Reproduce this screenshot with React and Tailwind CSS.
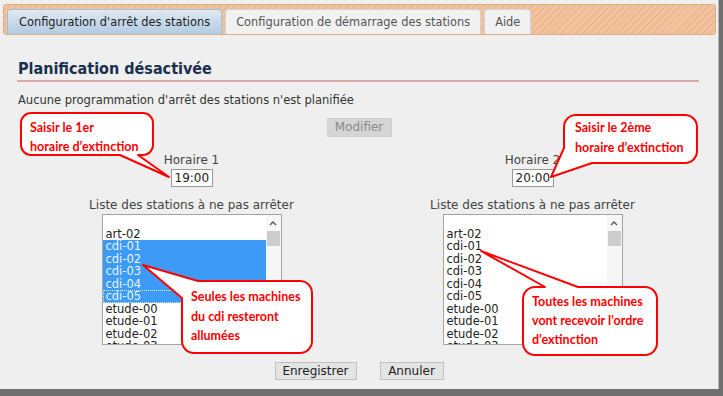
import React from "react";

const stations = [
  "",
  "art-02",
  "cdi-01",
  "cdi-02",
  "cdi-03",
  "cdi-04",
  "cdi-05",
  "etude-00",
  "etude-01",
  "etude-02",
  "etude-03",
];

const selectedLeft = ["cdi-01", "cdi-02", "cdi-03", "cdi-04", "cdi-05"];

const StationList = ({ selected = [] }) => {
  return (
    <div className="relative w-[180px] h-[131px] border border-[#a4a4a4] bg-white overflow-hidden">
      <div className="w-[164px]">
        {stations.map((name, i) => {
          const isSel = selected.includes(name);
          const isLast = name === "cdi-05" && isSel;
          return (
            <div
              key={i}
              className={
                "h-[12.5px] leading-[12.5px] pl-[3px] text-[11.5px] whitespace-nowrap " +
                (isSel ? "bg-[#3d9bf7] text-[#eaf3ff] " : "text-[#222] ") +
                (isLast ? "outline outline-1 outline-dotted outline-[#d8e8ff] -outline-offset-1" : "")
              }
            >
              {name}
            </div>
          );
        })}
      </div>
      {/* scrollbar */}
      <div className="absolute right-0 top-0 bottom-0 w-[15px] bg-[#f6f6f6] flex flex-col items-center">
        <div className="h-[15px] flex items-center justify-center">
          <svg width="8" height="6" viewBox="0 0 8 6">
            <path d="M1 5 L4 2 L7 5" fill="none" stroke="#555" strokeWidth="1.3" />
          </svg>
        </div>
        <div className="w-[13px] h-[15px] mt-[1px] bg-[#cdcdcd]" />
      </div>
    </div>
  );
};

const Column = ({ label, time, selected }) => (
  <div className="w-[260px] flex flex-col items-center">
    <div className="text-[12px] leading-[14px] text-[#444]">{label}</div>
    <div className="mt-[2px] w-[42px] h-[18px] border border-[#9a9a9a] bg-white text-[12px] leading-[16px] pl-[3px] text-[#222]">
      {time}
    </div>
    <div className="mt-[11px] text-[12px] leading-[14px] text-[#444] whitespace-nowrap">
      Liste des stations à ne pas arrêter
    </div>
    <div className="mt-[2px]">
      <StationList selected={selected} />
    </div>
  </div>
);

const calloutText = "absolute text-[#ff0000] font-bold text-[12.5px] whitespace-nowrap";

const App = () => {
  return (
    <div
      className="w-[723px] h-[396px] bg-[#6f6f6f] overflow-hidden"
      style={{ fontFamily: '"DejaVu Sans", Verdana, sans-serif' }}
    >
      <div className="relative w-[719px] h-[389px] bg-[#eeefee] border-r border-[#b8b8b8]">
        {/* tab bar */}
        <div className="pt-[4px] pl-[3px] pr-[2px]">
          <div className="h-[31px] rounded-[3px] border border-[#dcae86] bg-[repeating-linear-gradient(135deg,#f1c49e_0px,#f1c49e_3px,#ebba92_3px,#ebba92_5px)] flex items-end gap-[3px] pl-[3px]">
            <div className="h-[25px] px-[11px] rounded-t-[3px] border border-b-0 border-[#a7bfd6] bg-gradient-to-b from-[#dfe9f3] to-[#b2cbe2] text-[11.4px] leading-[24px] text-[#222]">
              Configuration d'arrêt des stations
            </div>
            <div className="h-[25px] px-[10px] rounded-t-[3px] border border-b-0 border-[#d2d2d2] bg-[#f1f1f1] text-[11.4px] leading-[24px] text-[#555]">
              Configuration de démarrage des stations
            </div>
            <div className="h-[25px] px-[10px] rounded-t-[3px] border border-b-0 border-[#d2d2d2] bg-[#f1f1f1] text-[11.4px] leading-[24px] text-[#555]">
              Aide
            </div>
          </div>
        </div>

        {/* heading */}
        <div className="px-[17px] mt-[24px]">
          <div className="text-[16px] leading-[20px] font-bold font-stretch-condensed text-[#1b2f4e] pl-[1px]">
            Planification désactivée
          </div>
          <div className="mt-[1px] h-[2px] bg-[#dba6a6] mr-[2px]" />
          <div className="mt-[11px] text-[11.5px] leading-[14px] text-[#333] pl-[1px]">
            Aucune programmation d'arrêt des stations n'est planifiée
          </div>
        </div>

        {/* modifier */}
        <div className="mt-[11px] flex justify-center">
          <div className="w-[65px] h-[19px] bg-[#d5d5d5] border border-[#d0d0d0] text-[12px] leading-[17px] text-center text-[#8a8a8a]">
            Modifier
          </div>
        </div>

        {/* columns */}
        <div className="mt-[16px] flex justify-center gap-[81px] pl-[6px]">
          <Column label="Horaire 1" time="19:00" selected={selectedLeft} />
          <Column label="Horaire 2" time="20:00" selected={[]} />
        </div>

        {/* buttons */}
        <div className="mt-[17px] flex justify-center gap-[23px]">
          <div className="w-[82px] h-[18px] bg-[#e4e4e4] border border-[#c0c0c0] text-[12px] leading-[16px] text-center text-[#222]">
            Enregistrer
          </div>
          <div className="w-[64px] h-[18px] bg-[#e4e4e4] border border-[#c0c0c0] text-[12px] leading-[16px] text-center text-[#222]">
            Annuler
          </div>
        </div>

        {/* callouts */}
        <svg className="absolute inset-0 pointer-events-none" width="719" height="389">
          <g fill="#fff" stroke="#ff0000" strokeWidth="2" strokeLinejoin="round">
            <path d="M31 113 H143 A10 10 0 0 1 153 123 V145 A10 10 0 0 1 143 155 H138 L169 177 L120 155 H31 A10 10 0 0 1 21 145 V123 A10 10 0 0 1 31 113 Z" />
            <path d="M576 115 H685 A12 12 0 0 1 697 127 V151 A12 12 0 0 1 685 163 H592 L551 177 L564 148 V127 A12 12 0 0 1 576 115 Z" />
            <path d="M198 281 H300 A12 12 0 0 1 312 293 V341 A12 12 0 0 1 300 353 H194 A12 12 0 0 1 182 341 V298 L143 265 L198 281 Z" />
            <path d="M535 287 H545 L481 251 L578 287 H645 A12 12 0 0 1 657 299 V343 A12 12 0 0 1 645 355 H535 A12 12 0 0 1 523 343 V299 A12 12 0 0 1 535 287 Z" />
          </g>
        </svg>
        <div className={calloutText + " left-[30px] top-[118px] leading-[19px]"} style={{ fontFamily: "Lato, sans-serif" }}>
          Saisir le 1er
          <br />
          horaire d’extinction
        </div>
        <div className={calloutText + " left-[575px] top-[118px] leading-[20px]"} style={{ fontFamily: "Lato, sans-serif" }}>
          Saisir le 2ème
          <br />
          horaire d’extinction
        </div>
        <div className={calloutText + " left-[191px] top-[287px] leading-[19.5px]"} style={{ fontFamily: "Lato, sans-serif" }}>
          Seules les machines
          <br />
          du cdi resteront
          <br />
          allumées
        </div>
        <div className={calloutText + " left-[532px] top-[292px] leading-[19px]"} style={{ fontFamily: "Lato, sans-serif" }}>
          Toutes les machines
          <br />
          vont recevoir l’ordre
          <br />
          d’extinction
        </div>
      </div>
    </div>
  );
};

export default App;
